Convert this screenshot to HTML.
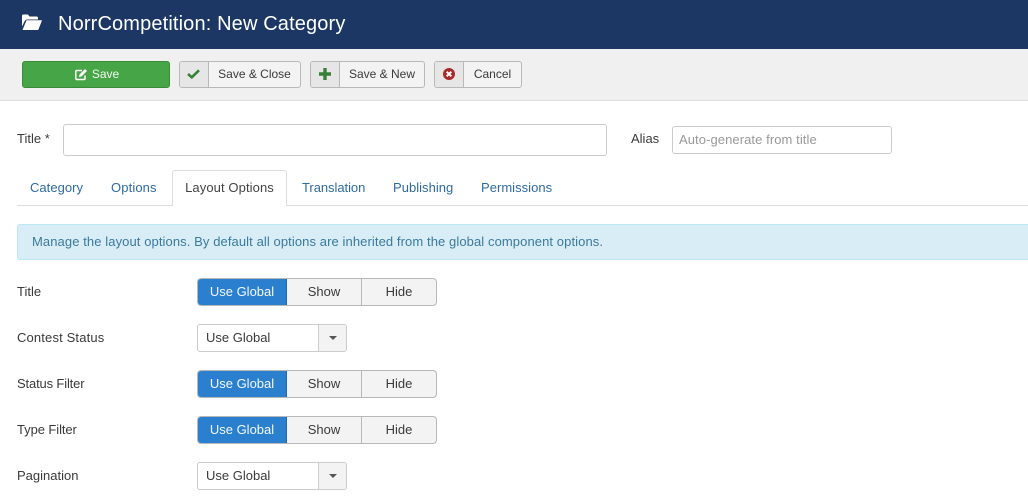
<!DOCTYPE html>
<html><head><meta charset="utf-8"><style>
html,body{margin:0;padding:0;background:#fff}
body{width:1028px;height:501px;overflow:hidden;position:relative;font-family:"Liberation Sans",sans-serif;font-size:13px;color:#3a3a3a}
.a{position:absolute;box-sizing:border-box;white-space:nowrap}
.hdr{left:0;top:0;width:1028px;height:49px;background:#1c3764}
.tb{left:0;top:49px;width:1028px;height:52px;background:#f0f0f0;border-bottom:1px solid #dedede}
.btn{height:27px;top:61px;background:#f3f3f3;border:1px solid #b8b8b8;border-radius:3px;font-size:12px;color:#3a3a3a;line-height:25px;overflow:hidden}
.ic{position:absolute;left:0;top:0;width:29px;height:25px;box-sizing:border-box;background:#e6e6e6;border-right:1px solid #b8b8b8}
.tx{position:absolute;left:29px;right:0;text-align:center;top:0}
.lbl{left:17px;font-size:13px;line-height:18px}
.tab{top:179px;font-size:13px;color:#2d6ca2;line-height:18px;letter-spacing:.03px}
.grp{left:197px;width:240px;height:28px;border:1px solid #b8b8b8;border-radius:4px;background:#f3f3f3;overflow:hidden}
.grp div{position:absolute;top:0;height:26px;line-height:26px;text-align:center;font-size:13px}
.g1{left:-1px;width:89px;top:-1px!important;height:28px!important;line-height:28px!important;background:#2a7fcf;color:#f4f8fc;border-right:1px solid #1f6ab0;text-indent:1px}
.g2{left:88px;width:75px;border-right:1px solid #b8b8b8;text-indent:1px}
.g3{left:164px;width:74px}
.sel{left:197px;width:150px;height:28px;border:1px solid #ccc;border-radius:3px;background:#fff;overflow:hidden;line-height:26px;padding-left:8px;font-size:13px}
.sel i{position:absolute;right:0;top:0;width:27px;height:26px;background:#f3f3f3;border-left:1px solid #ccc}
.sel i:after{content:"";position:absolute;left:9.500px;top:11px;border:4px solid transparent;border-top:4px solid #555;border-bottom:0}
</style></head><body>
<div class="a hdr"></div>
<svg class="a" style="left:22px;top:14px" width="20" height="17" viewBox="0 0 20 17"><path fill="#fff" d="M0 2Q0 0.500 1.500 0.500H6L7.500 2.500H14.500Q16 2.500 16 4V5.500H5Q3.500 5.500 2.700 7L0 12.500Z"/><path fill="#fff" d="M4.500 6.300H20L16.500 15.500Q16.200 16 15.500 16H0.500Z"/></svg>
<div class="a" style="left:58px;top:12px;font-size:20px;line-height:24px;color:#fff;letter-spacing:.14px">NorrCompetition: New Category</div>
<div class="a tb"></div>

<div class="a btn" style="left:22px;width:148px;background:#46a546;border-color:#3a8a3a;color:#f2f9f2;text-align:center"><span style="margin-left:19px">Save</span></div>
<svg class="a" style="left:75px;top:68px" width="13" height="13" viewBox="0 0 13 13"><path fill="none" stroke="#fff" stroke-width="1.500" d="M10 7.500V10.500Q10 11.500 9 11.500H1.800Q0.800 11.500 0.800 10.500V3.500Q0.800 2.500 1.800 2.500H7"/><path fill="#fff" d="M4.500 6.500L10 1L12 3L6.500 8.500L4 9Z"/></svg>

<div class="a btn" style="left:179px;width:122px"><div class="ic"></div><div class="tx">Save &amp; Close</div></div>
<svg class="a" style="left:187px;top:69px" width="13" height="10" viewBox="0 0 13 10"><path fill="none" stroke="#378137" stroke-width="2.600" d="M1 5L4.800 8.300L12 1.300"/></svg>

<div class="a btn" style="left:310px;width:115px"><div class="ic"></div><div class="tx">Save &amp; New</div></div>
<svg class="a" style="left:319px;top:68px" width="12" height="12" viewBox="0 0 12 12"><path fill="#378137" d="M4.300 0H7.700V4.300H12V7.700H7.700V12H4.300V7.700H0V4.300H4.300Z"/></svg>

<div class="a btn" style="left:434px;width:88px"><div class="ic"></div><div class="tx">Cancel</div></div>
<svg class="a" style="left:443px;top:68px" width="12" height="12" viewBox="0 0 12 12"><circle cx="6" cy="6" r="6" fill="#a82a2a"/><path stroke="#fff" stroke-width="2" d="M3.700 3.700L8.300 8.300M8.300 3.700L3.700 8.300"/></svg>

<div class="a lbl" style="top:130px">Title *</div>
<div class="a" style="left:63px;top:124px;width:544px;height:32px;border:1px solid #ccc;border-radius:3px"></div>
<div class="a lbl" style="left:631px;top:130px">Alias</div>
<div class="a" style="left:672px;top:126px;width:220px;height:28px;border:1px solid #ccc;border-radius:3px;color:#999;font-size:13px;letter-spacing:.08px;line-height:26px;padding-left:6px">Auto-generate from title</div>

<div class="a" style="left:17px;top:205px;width:1011px;height:1px;background:#ddd"></div>
<div class="a tab" style="left:30px">Category</div>
<div class="a tab" style="left:111px;letter-spacing:.12px">Options</div>
<div class="a" style="left:172px;top:170px;width:115px;height:36px;background:#fff;border:1px solid #ddd;border-bottom:0;border-radius:3px 3px 0 0;text-align:center;line-height:34px;color:#444;letter-spacing:.1px">Layout Options</div>
<div class="a tab" style="left:302px;letter-spacing:-.05px">Translation</div>
<div class="a tab" style="left:393px">Publishing</div>
<div class="a tab" style="left:481px">Permissions</div>

<div class="a" style="left:17px;top:224px;width:1020px;height:36px;background:#d9edf7;border:1px solid #bce8f1;border-radius:3px;color:#3a7a9c;line-height:34px;padding-left:14px;font-size:13px;letter-spacing:.09px">Manage the layout options. By default all options are inherited from the global component options.</div>

<div class="a lbl" style="top:283px">Title</div>
<div class="a grp" style="top:278px"><div class="g1">Use Global</div><div class="g2">Show</div><div class="g3">Hide</div></div>
<div class="a lbl" style="top:329px;letter-spacing:.15px">Contest Status</div>
<div class="a sel" style="top:324px">Use Global<i></i></div>
<div class="a lbl" style="top:375px;letter-spacing:-.15px">Status Filter</div>
<div class="a grp" style="top:370px"><div class="g1">Use Global</div><div class="g2">Show</div><div class="g3">Hide</div></div>
<div class="a lbl" style="top:421px;letter-spacing:-.08px">Type Filter</div>
<div class="a grp" style="top:416px"><div class="g1">Use Global</div><div class="g2">Show</div><div class="g3">Hide</div></div>
<div class="a lbl" style="top:467px">Pagination</div>
<div class="a sel" style="top:462px">Use Global<i></i></div>
</body></html>
